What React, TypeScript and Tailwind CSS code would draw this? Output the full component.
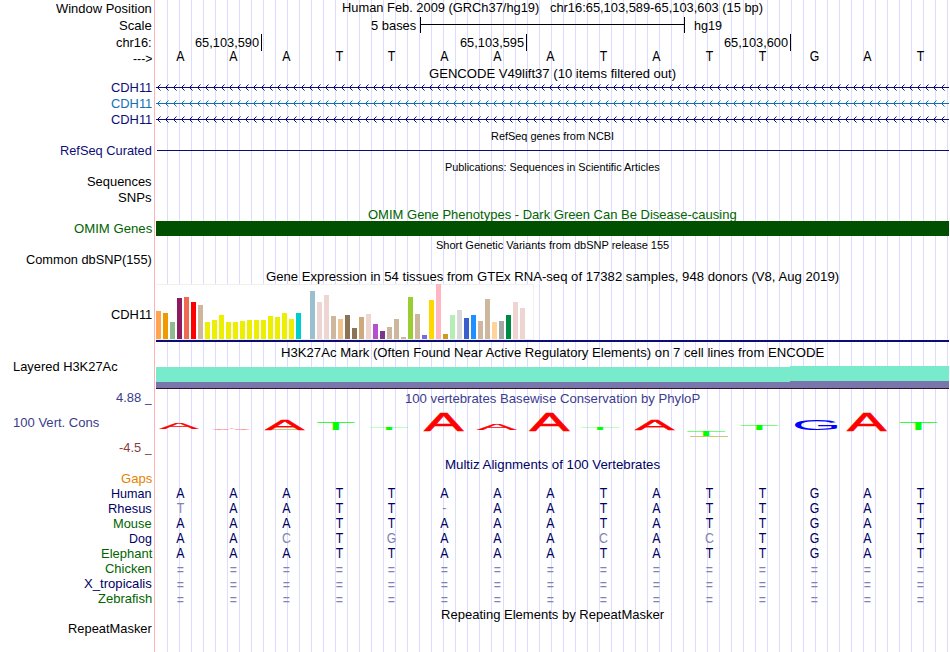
import { useLayoutEffect, useRef, useState } from 'react';
import type { ReactNode } from 'react';

const NAVY = 'text-[#0c0c78]';
const DEEP = 'text-[#000064]';
const GREEN = 'text-[#006400]';

const BASES = 'AAATTAAATATTGAT';

// height in px and color of every tissue bar
const TISSUES: [number, string][] = [
  [28, '#ffa54f'], [26, '#ee9a00'], [17, '#8fbc8f'], [41, '#8b1c62'], [42, '#ee6a50'], [37, '#ff0000'],
  [34, '#cdb79e'], [17, '#eeee00'], [19, '#eeee00'], [24, '#eeee00'], [17, '#eeee00'], [17, '#eeee00'],
  [18, '#eeee00'], [19, '#eeee00'], [19, '#eeee00'], [19, '#eeee00'], [23, '#eeee00'], [22, '#eeee00'],
  [26, '#eeee00'], [20, '#eeee00'], [26, '#00cdcd'], [0, '#ee82ee'], [48, '#9ac0cd'], [37, '#eed5d2'],
  [44, '#eed5d2'], [23, '#cdb79e'], [20, '#eec591'], [24, '#8b7355'], [11, '#8b7355'], [22, '#cdaa7d'],
  [25, '#eed5d2'], [15, '#b452cd'], [8, '#7a378b'], [12, '#cdb79e'], [20, '#cdb79e'], [2, '#cdb79e'],
  [42, '#9acd32'], [25, '#cdb79e'], [4, '#7a67ee'], [39, '#ffd700'], [55, '#ffb6c1'], [5, '#cd9b1d'],
  [24, '#b4eeb4'], [29, '#d9d9d9'], [21, '#3a5fcd'], [24, '#1e90ff'], [18, '#cdb79e'], [40, '#cdb79e'],
  [17, '#ffd39b'], [18, '#a6a6a6'], [24, '#008b45'], [37, '#eed5d2'], [31, '#eed5d2'], [0, '#ff00ff'],
];

// letter, left, width, top, height inside the conservation track
const LOGO: [string, number, number, number, number][] = [
  ['A', 3, 40, 12, 6],
  ['A', 56, 39, 17, 1.5],
  ['A', 108.5, 40.5, 8, 10.5],
  ['T', 161, 37.5, 11, 8],
  ['T', 214, 38, 16, 3],
  ['A', 267.5, 40.5, 2, 18],
  ['A', 320.5, 40.5, 12, 7],
  ['A', 373, 41, 2, 18],
  ['T', 425, 38, 16, 3],
  ['A', 478.5, 40.5, 8, 11],
  ['T', 531, 38, 20, 5],
  ['T', 584.5, 37.5, 14, 5],
  ['G', 639, 43, 8, 11],
  ['A', 690.5, 40.5, 2, 18],
  ['T', 743.5, 37.5, 11, 8],
];

// ink box of each glyph for a font size of 100: left, width, height, outline
const INK: Record<string, [number, number, number, number]> = {
  A: [-0.8, 68.5, 71, 2],
  T: [2, 57, 69, 0],
  G: [5, 67, 71, 0],
};

const LOGO_COLOR: Record<string, string> = { A: '#ff0000', T: '#00ff00', G: '#0000ff' };

const ALIGNMENT: { name: string; green?: boolean; width: number; seq: string }[] = [
  { name: 'Human', width: 41, seq: BASES },
  { name: 'Rhesus', width: 44, seq: 'TAATT-AATATTGAT' },
  { name: 'Mouse', green: true, width: 39, seq: BASES },
  { name: 'Dog', width: 23, seq: 'AACTGAAACACTGAT' },
  { name: 'Elephant', green: true, width: 51, seq: BASES },
  { name: 'Chicken', green: true, width: 47, seq: '===============' },
  { name: 'X_tropicalis', width: 68, seq: '===============' },
  { name: 'Zebrafish', green: true, width: 54, seq: '===============' },
];

// Condenses the text so that it takes exactly the given width
function Fit({ children, width, className = '' }: { children: string; width: number; className?: string }) {
  const ref = useRef<HTMLSpanElement>(null);
  const [scale, setScale] = useState(1);

  useLayoutEffect(() => {
    if (ref.current) setScale(width / ref.current.offsetWidth);
  }, [width]);

  return (
    <span className={`flex ${className}`} style={{ width }}>
      <span ref={ref} className="origin-left whitespace-pre" style={{ transform: `scaleX(${scale})` }}>
        {children}
      </span>
    </span>
  );
}

function Row({ height, label, children }: { height: string; label?: ReactNode; children?: ReactNode }) {
  return (
    <div className={`flex ${height}`}>
      <div className="flex w-[155px] shrink-0 justify-end border-r border-[#ffb4b4] pr-0.5">{label}</div>
      <div className="ml-px w-[793px] bg-[repeating-linear-gradient(to_right,transparent_0_11px,#dcdcff_11px_12px)]">
        {children}
      </div>
    </div>
  );
}

function Label({ text, width, color = '' }: { text: string; width: number; color?: string }) {
  return (
    <div className={`h-4 leading-4 ${color}`}>
      <Fit width={width}>{text}</Fit>
    </div>
  );
}

function Title({ text, width, color = '', small }: { text: string; width: number; color?: string; small?: boolean }) {
  return (
    <div className={`flex h-4 justify-center leading-4 ${small ? 'text-[11px]' : ''} ${color}`}>
      <Fit width={width}>{text}</Fit>
    </div>
  );
}

function Gene({ color }: { color: string }) {
  const starts = Array.from({ length: 99 }, (_, i) => 1 + i * 8);
  return (
    <svg width="793" height="16" className={`block ${color}`} shapeRendering="crispEdges" fill="currentColor">
      <rect x="0" y="7" width="793" height="1" />
      {starts.map((x) => (
        <path
          key={x}
          d={`M${x + 1} 6h1v1h-1zM${x + 2} 5h1v1h-1zM${x + 1} 8h1v1h-1zM${x + 2} 9h1v1h-1z`}
        />
      ))}
      {starts.map((x) => (
        <path key={x} opacity="0.5" d={`M${x + 3} 4h1v1h-1zM${x + 3} 10h1v1h-1z`} />
      ))}
    </svg>
  );
}

function Sequence({ seq, color, faint }: { seq: string; color: string; faint?: boolean }) {
  return (
    <div className={`grid h-[15px] grid-cols-15 text-sm/[15px] ${seq[0] === '=' ? 'pt-0.5' : ''}`}>
      {seq.split('').map((base, i) => (
        <span
          key={i}
          className={`mr-1 scale-x-[0.88] text-center ${faint && base !== BASES[i] ? 'text-[#8282b4]' : color}`}
        >
          {base}
        </span>
      ))}
    </div>
  );
}

function Logo() {
  return (
    <svg width="793" height="30" className="block overflow-visible">
      <rect x="114" y="18" width="32" height="1" fill="#c8c878" />
      <rect x="534" y="25" width="38" height="1" fill="#c8c878" />
      {LOGO.map(([letter, x, w, y, h], i) => {
        const [left, inkW, inkH, outline] = INK[letter];
        const sx = w / inkW;
        const sy = h / inkH;
        return (
          <text
            key={i}
            fontSize="100"
            fill={LOGO_COLOR[letter]}
            stroke={LOGO_COLOR[letter]}
            strokeWidth={outline}
            transform={`translate(${x - left * sx} ${y + h}) scale(${sx} ${sy})`}
          >
            {letter}
          </text>
        );
      })}
    </svg>
  );
}

export default function App() {
  return (
    <div className="h-[652px] w-[950px] overflow-hidden bg-white font-['Liberation_Sans',Arial,sans-serif] text-[13.5px] text-black">
      <Row height="h-[17px]" label={<div className="pt-px"><Label text="Window Position" width={96} /></div>}>
        <Title text="Human Feb. 2009 (GRCh37/hg19)   chr16:65,103,589-65,103,603 (15 bp)" width={421} />
      </Row>
      <Row height="h-[17px]" label={<div className="pt-px"><Label text="Scale" width={33} /></div>}>
        <div className="flex pl-[215px] leading-4">
          <Fit width={45} className="pt-px">5 bases</Fit>
          <div className="ml-1 h-4 w-[265px] border-x border-black">
            <div className="mt-[7px] h-px bg-black" />
          </div>
          <Fit width={28} className="ml-[9px] pt-px">hg19</Fit>
        </div>
      </Row>
      <Row height="h-[17px]" label={<div className="pt-px"><Label text="chr16:" width={36} /></div>}>
        <div className="grid h-[15px] grid-cols-[106px_265px_264px] text-[13px]/[17px]">
          <div className="flex justify-end border-r border-black pr-0.5"><Fit width={64}>65,103,590</Fit></div>
          <div className="flex justify-end border-r border-black pr-0.5"><Fit width={64}>65,103,595</Fit></div>
          <div className="flex justify-end border-r border-black pr-0.5"><Fit width={64}>65,103,600</Fit></div>
        </div>
      </Row>
      <Row height="h-[14px]" label={<Label text="--->" width={19} />}>
        <div className="-mt-0.5">
          <Sequence seq={BASES} color="text-black" />
        </div>
      </Row>

      {/* Gene tracks */}
      <Row height="h-[15px]">
        <div className="pt-px">
          <Title text="GENCODE V49lift37 (10 items filtered out)" width={247} />
        </div>
      </Row>
      <Row height="h-4" label={<Label text="CDH11" width={41} color={NAVY} />}>
        <Gene color={NAVY} />
      </Row>
      <Row height="h-4" label={<Label text="CDH11" width={41} color="text-[#1470b4]" />}>
        <Gene color="text-[#1470b4]" />
      </Row>
      <Row height="h-4" label={<Label text="CDH11" width={41} color={NAVY} />}>
        <Gene color={NAVY} />
      </Row>
      <Row height="h-[15px]">
        <Title small text="RefSeq genes from NCBI" width={123} />
      </Row>
      <Row height="h-4" label={<Label text="RefSeq Curated" width={92} color={NAVY} />}>
        <div className="mt-[7px] ml-px h-px bg-[#0c0c78]" />
      </Row>
      <Row height="h-[15px]">
        <Title small text="Publications: Sequences in Scientific Articles" width={215} />
      </Row>
      <Row height="h-4" label={<Label text="Sequences" width={65} />} />
      <Row height="h-4" label={<Label text="SNPs" width={34} />} />
      <Row height="h-[15px]">
        <div className="pt-px">
          <Title text="OMIM Gene Phenotypes - Dark Green Can Be Disease-causing" width={369} color={GREEN} />
        </div>
      </Row>
      <Row height="h-4" label={<Label text="OMIM Genes" width={78} color={GREEN} />}>
        <div className="relative h-[15px] bg-[#005000]" />
      </Row>
      <Row height="h-[15px]">
        <Title small text="Short Genetic Variants from dbSNP release 155" width={233} />
      </Row>
      <Row height="h-4" label={<Label text="Common dbSNP(155)" width={126} />} />

      {/* Expression bars */}
      <Row height="h-4">
        <div className="pt-px">
          <Title text="Gene Expression in 54 tissues from GTEx RNA-seq of 17382 samples, 948 donors (V8, Aug 2019)" width={573} />
        </div>
      </Row>
      <Row height="h-[58px]" label={<div className="pt-[23px]"><Label text="CDH11" width={41} /></div>}>
        <div className="flex h-14 w-[378px] items-end gap-0.5 border-y border-r border-[#f0f0f0] bg-white">
          {TISSUES.map(([height, color], i) => (
            <div key={i} className="w-[5px] shrink-0" style={{ height, backgroundColor: color }} />
          ))}
        </div>
        <div className="h-0.5 bg-[#0c0c78]" />
      </Row>

      {/* Histone mark */}
      <Row
        height="h-[47px]"
        label={<div className="w-full pt-[17px] pl-[13px]"><Label text="Layered H3K27Ac" width={105} /></div>}
      >
        <div className="pt-[3px]">
          <Title text="H3K27Ac Mark (Often Found Near Active Regulatory Elements) on 7 cell lines from ENCODE" width={543} />
        </div>
        <div className="mt-[5px] flex h-[22px] items-end">
          <div className="h-[21px] w-[634px] border-b-6 border-[#7876aa] bg-[#78ebcd]" />
          <div className="h-[22px] grow border-b-7 border-[#7876aa] bg-[#78ebcd]" />
        </div>
        <div className="h-px bg-[#32142d]" />
      </Row>

      {/* Conservation */}
      <Row
        height="h-[68px]"
        label={
          <div className="flex w-full flex-col pl-[13px]">
            <div className="mt-px flex h-4 justify-end gap-1 leading-4 text-[#3c3c8c]">
              <Fit width={25}>4.88</Fit>
              <Fit width={7}>_</Fit>
            </div>
            <div className="mt-[9px]">
              <Label text="100 Vert. Cons" width={86} color="text-[#3c3c8c]" />
            </div>
            <div className="mt-[9px] flex h-4 justify-end gap-1 leading-4 text-[#8c3c3c]">
              <Fit width={22}>-4.5</Fit>
              <Fit width={7}>_</Fit>
            </div>
          </div>
        }
      >
        <div className="pt-[2px] pb-1">
          <Title text="100 vertebrates Basewise Conservation by PhyloP" width={295} color="text-[#3c3c8c]" />
        </div>
        <Logo />
      </Row>

      {/* Alignment */}
      <Row height="h-[14px]">
        <Title text="Multiz Alignments of 100 Vertebrates" width={215} color={DEEP} />
      </Row>
      <Row height="h-[15px]" label={<Label text="Gaps" width={31} color="text-[#e68200]" />} />
      {ALIGNMENT.map((species) => (
        <Row
          key={species.name}
          height="h-[15px]"
          label={<Label text={species.name} width={species.width} color={species.green ? GREEN : DEEP} />}
        >
          <Sequence seq={species.seq} color={DEEP} faint />
        </Row>
      ))}
      <Row height="h-4">
        <div className="pt-px">
          <Title text="Repeating Elements by RepeatMasker" width={223} />
        </div>
      </Row>
      <Row height="h-[30px]" label={<div className="-mt-px"><Label text="RepeatMasker" width={84} /></div>} />
    </div>
  );
}
